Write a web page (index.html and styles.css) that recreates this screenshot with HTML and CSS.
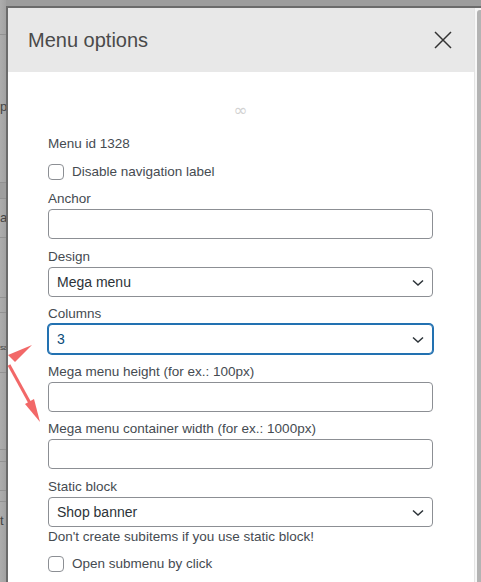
FILE: index.html
```html
<!DOCTYPE html>
<html lang="en">
<head>
    <meta charset="UTF-8">
    <meta name="viewport" content="width=device-width, initial-scale=1.0">
    <title>Menu options</title>
    <link rel="stylesheet" href="styles.css">
</head>
<body>
    <div class="screen">
        <!-- the page behind the modal, only a sliver shows -->
        <div class="behind">
            <div class="row" style="height: 35px"></div>
            <div class="row" style="height: 148px"><span class="frag" style="margin-top: 64px">p</span></div>
            <div class="row shade" style="height: 16px"></div>
            <div class="row" style="height: 39px"><span class="frag" style="margin-top: 11px">a</span></div>
            <div class="row" style="height: 60px"></div>
            <div class="row" style="height: 15px"></div>
            <div class="row" style="height: 60px"><span class="frag small" style="margin-top: 29px">sa</span></div>
            <div class="row" style="height: 77px"></div>
            <div class="row" style="height: 12px"></div>
            <div class="row" style="height: 29px"></div>
            <div class="row" style="height: 11px"></div>
            <div class="row last"><span class="frag" style="margin-top: 11px">t</span></div>
        </div>

        <div class="modal-wrap">
            <div class="modal">
                <div class="modal-head">
                    <h2>Menu options</h2>
                    <button class="close" aria-label="Close">
                        <svg width="18" height="18" viewBox="0 0 18 18">
                            <path d="M1 1L17 17M17 1L1 17" stroke="#333" stroke-width="1.5" fill="none"/>
                        </svg>
                    </button>
                </div>

                <div class="modal-body">
                    <div class="spinner">∞</div>

                    <div class="menu-id">Menu id 1328</div>

                    <label class="check">
                        <input type="checkbox">
                        <span>Disable navigation label</span>
                    </label>

                    <div class="field">
                        <label>Anchor</label>
                        <input type="text">
                    </div>

                    <div class="field">
                        <label>Design</label>
                        <div class="select-box">
                            <select>
                                <option>Mega menu</option>
                            </select>
                            <svg class="chevron" width="12" height="8" viewBox="0 0 12 8">
                                <path d="M1 1.5L6 6L11 1.5" stroke="#2c3338" stroke-width="1.5" fill="none"/>
                            </svg>
                        </div>
                    </div>

                    <div class="field">
                        <label>Columns</label>
                        <div class="select-box">
                            <select class="focused">
                                <option>3</option>
                            </select>
                            <svg class="chevron" width="12" height="8" viewBox="0 0 12 8">
                                <path d="M1 1.5L6 6L11 1.5" stroke="#2c3338" stroke-width="1.5" fill="none"/>
                            </svg>
                        </div>
                    </div>

                    <div class="field">
                        <label>Mega menu height (for ex.: 100px)</label>
                        <input type="text">
                    </div>

                    <div class="field">
                        <label>Mega menu container width (for ex.: 1000px)</label>
                        <input type="text">
                    </div>

                    <div class="field">
                        <label>Static block</label>
                        <div class="select-box">
                            <select>
                                <option>Shop banner</option>
                            </select>
                            <svg class="chevron" width="12" height="8" viewBox="0 0 12 8">
                                <path d="M1 1.5L6 6L11 1.5" stroke="#2c3338" stroke-width="1.5" fill="none"/>
                            </svg>
                        </div>
                        <p class="help">Don't create subitems if you use static block!</p>
                    </div>

                    <label class="check">
                        <input type="checkbox">
                        <span>Open submenu by click</span>
                    </label>
                </div>
            </div>
            <div class="scrollbar"><div class="thumb"></div></div>
        </div>

        <!-- annotation arrows drawn over the screenshot -->
        <svg class="arrows" width="60" height="440" viewBox="0 0 60 440">
            <polygon points="8,355 32,345 15,362" fill="#f26868"/>
            <line x1="9" y1="365" x2="31" y2="405" stroke="#f26868" stroke-width="3"/>
            <polygon points="25,404 40,422 34,399" fill="#f26868"/>
        </svg>
    </div>
</body>
</html>
```

FILE: styles.css
```css
* {
    margin: 0;
    padding: 0;
    box-sizing: border-box;
}

body {
    font-family: 'Liberation Sans', Arial, sans-serif;
    background: #9c9c9c;
}

.screen {
    position: relative;
    width: 481px;
    height: 582px;
    overflow: hidden;
    display: flex;
    background: #9d9d9d;
}

/* sliver of the page behind */
.behind {
    width: 6px;
    flex-shrink: 0;
    display: flex;
    flex-direction: column;
    background: linear-gradient(90deg, #adadad 0%, #a2a2a2 100%);
    overflow: hidden;
}

.row {
    border-bottom: 1px solid #929292;
    display: flex;
    flex-direction: column;
    flex-shrink: 0;
}

.row.shade {
    background: #9f9f9f;
}

.row.last {
    flex: 1;
    border-bottom: none;
}

.frag {
    font-size: 13px;
    line-height: 16px;
    color: #444;
    white-space: nowrap;
}

.frag.small {
    font-size: 8px;
    line-height: 12px;
    letter-spacing: -0.5px;
}

/* modal */
.modal-wrap {
    flex: 1;
    display: flex;
    margin-top: 6px;
    border-top: 2px solid #6b6b6b;
    border-left: 2px solid #6b6b6b;
    background: #fff;
}

.modal {
    flex: 1;
    display: flex;
    flex-direction: column;
}

.modal-head {
    height: 64px;
    background: #e8e8e8;
    display: flex;
    align-items: center;
    justify-content: space-between;
    padding: 0 22px 0 20px;
}

.modal-head h2 {
    font-size: 20px;
    font-weight: 400;
    color: #4a4a4a;
}

.close {
    border: none;
    background: none;
    width: 18px;
    height: 18px;
    display: flex;
}

.modal-body {
    padding: 28px 41px 0 40px;
    font-size: 13.5px;
    color: #454b51;
}

.spinner {
    text-align: center;
    font-family: 'DejaVu Sans', sans-serif;
    font-size: 17px;
    line-height: 20px;
    color: #d2d2d2;
    margin-bottom: 15px;
}

.menu-id {
    line-height: 18px;
    margin-bottom: 10px;
}

.check {
    display: flex;
    align-items: center;
    gap: 8px;
    line-height: 18px;
    margin-bottom: 9px;
}

.check input {
    appearance: none;
    -webkit-appearance: none;
    width: 16px;
    height: 16px;
    border: 1px solid #8c8f94;
    border-radius: 4px;
    background: #fff;
}

.field {
    margin-bottom: 8.5px;
}

.field label {
    display: block;
    line-height: 18px;
    margin-bottom: 1px;
}

.field input,
.field select {
    display: block;
    width: 100%;
    height: 30px;
    border: 1px solid #8c8f94;
    border-radius: 4px;
    background: #fff;
    font-family: inherit;
    font-size: 14px;
    color: #2c3338;
    padding: 0 24px 0 8px;
    outline: none;
}

.field select {
    appearance: none;
    -webkit-appearance: none;
}

.field select.focused {
    border-color: #2271b1;
    box-shadow: 0 0 0 1px #2271b1;
    color: #0a4b78;
}

.select-box {
    position: relative;
}

.chevron {
    position: absolute;
    right: 9px;
    top: 12px;
}

.help {
    line-height: 18px;
    margin-top: 1px;
    margin-bottom: 9px;
}

/* modal scrollbar */
.scrollbar {
    width: 7px;
    flex-shrink: 0;
    background: #f7f7f7;
    border-left: 1px solid #e4e4e4;
    padding: 2px 0 0 2px;
}

.thumb {
    height: 100%;
    background: #b3b3b3;
    border-radius: 3px 0 0 0;
}

.arrows {
    position: absolute;
    left: 0;
    top: 0;
    pointer-events: none;
}
```
